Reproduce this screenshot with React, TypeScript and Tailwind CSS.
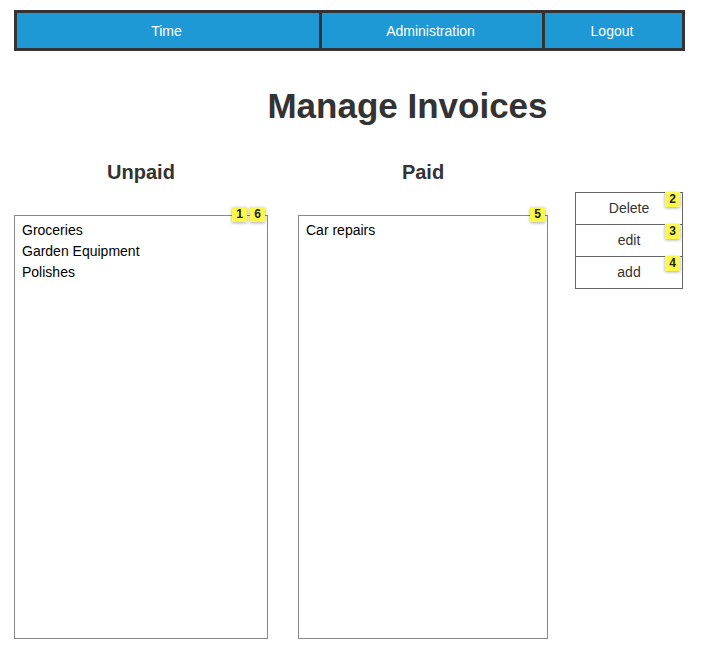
import type { ReactNode } from "react";

const unpaid = ["Groceries", "Garden Equipment", "Polishes"];
const paid = ["Car repairs"];

const actions = [
  { label: "Delete", note: 2 },
  { label: "edit", note: 3 },
  { label: "add", note: 4 },
];

function Note({ children }: { children: ReactNode }) {
  return (
    <span className="flex size-[15px] items-center justify-center bg-[#fdf94a] text-[12px] leading-[15px] font-bold text-[#222] shadow-[0_1px_3px_rgba(0,0,0,0.35)]">
      {children}
    </span>
  );
}

interface InvoiceListProps {
  id: string;
  title: string;
  items: string[];
  notes: number[];
}

function InvoiceList({ id, title, items, notes }: InvoiceListProps) {
  return (
    <>
      <label
        htmlFor={id}
        className="block text-center text-[20px] leading-6 font-bold text-[#333]"
      >
        {title}
      </label>
      <div className="relative mt-[31px]">
        <select
          id={id}
          multiple
          className="block h-[424px] w-full appearance-none overflow-auto border border-[#888] bg-white px-[7px] py-1.5 text-[14px] text-black outline-none"
        >
          {items.map((item) => (
            <option key={item} className="h-[21px] p-0 leading-[21px]">
              {item}
            </option>
          ))}
        </select>
        <div className="pointer-events-none absolute -top-2 right-[3px] flex gap-[3px]">
          {notes.map((note) => (
            <Note key={note}>{note}</Note>
          ))}
        </div>
      </div>
    </>
  );
}

export default function App() {
  return (
    <div className="min-h-screen bg-white pt-[10px] pr-[21px] pb-[18px] pl-[14px] font-['Liberation_Sans',Arial,sans-serif] text-[14px] text-[#333]">
      <nav className="grid h-[41px] grid-cols-[302fr_220fr_137fr] gap-[3px] border-[3px] border-[#333] bg-[#333] text-white">
        {["Time", "Administration", "Logout"].map((item) => (
          <a
            key={item}
            href="#"
            className="flex items-center justify-center bg-[#1f98d6] pt-0.5 pr-[3px]"
          >
            {item}
          </a>
        ))}
      </nav>

      <h1 className="mt-[35px] pl-[116px] text-center text-[35px] leading-10 font-bold">
        Manage Invoices
      </h1>

      <main className="mt-[34px] flex items-start pr-[2px]">
        <section className="mr-[30px] min-w-0 flex-[254]">
          <InvoiceList id="unpaid" title="Unpaid" items={unpaid} notes={[1, 6]} />
        </section>
        <section className="mr-[27px] min-w-0 flex-[250]">
          <InvoiceList id="paid" title="Paid" items={paid} notes={[5]} />
        </section>
        <div className="mt-8 w-[108px] divide-y divide-[#666] border border-[#666]">
          {actions.map(({ label, note }) => (
            <div key={label} className="relative">
              <button type="button" className="block h-[31px] w-full bg-white text-center">
                {label}
              </button>
              <div className="pointer-events-none absolute -top-px right-[2px]">
                <Note>{note}</Note>
              </div>
            </div>
          ))}
        </div>
      </main>
    </div>
  );
}
